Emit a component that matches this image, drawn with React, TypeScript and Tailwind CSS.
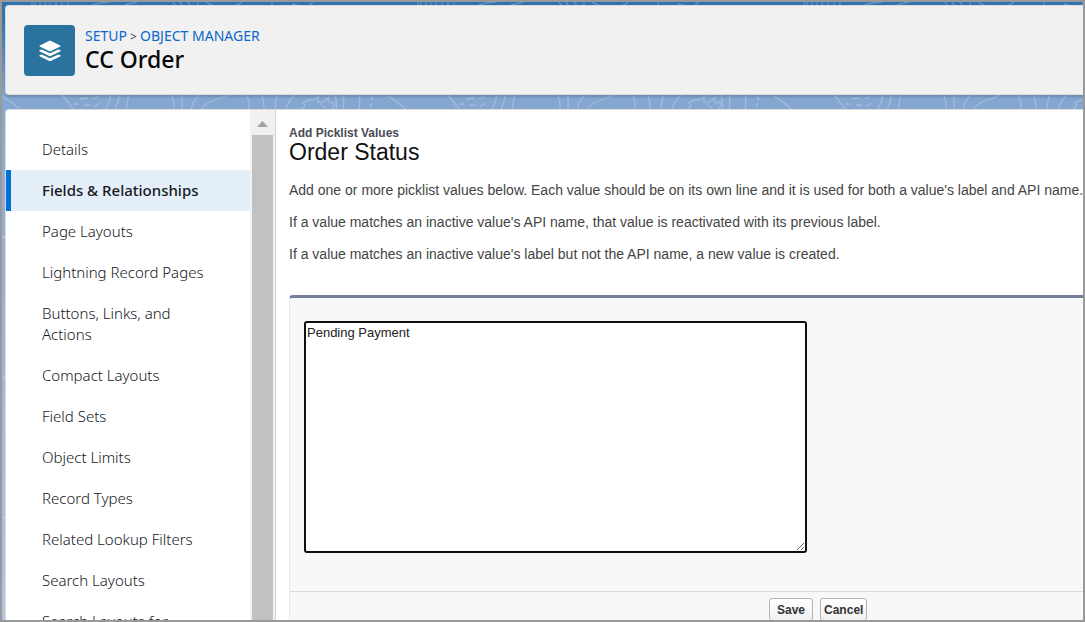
const navItems = [
  "Details",
  "Fields & Relationships",
  "Page Layouts",
  "Lightning Record Pages",
  "Buttons, Links, and Actions",
  "Compact Layouts",
  "Field Sets",
  "Object Limits",
  "Record Types",
  "Related Lookup Filters",
  "Search Layouts",
  "Search Layouts for Salesforce Classic",
];

const activeItem = "Fields & Relationships";

function ContourBackground() {
  return (
    <svg className="absolute inset-0 size-full" aria-hidden="true">
      <defs>
        <linearGradient id="sky" x1="0" y1="0" x2="0" y2="1">
          <stop offset="0" stopColor="#2e72b0" />
          <stop offset="0.03" stopColor="#3676b4" />
          <stop offset="0.15" stopColor="#83a6d0" />
          <stop offset="0.25" stopColor="#8cabd6" />
          <stop offset="1" stopColor="#b1c5e3" />
        </linearGradient>
        <pattern id="contours" width="386" height="140" patternUnits="userSpaceOnUse">
          <g fill="none" stroke="#ffffff" strokeOpacity="0.24" strokeWidth="1.3">
            <path d="M0 94C6 98 14 103 18 108M58 90L72 108M71 102h5M78 97l8-1M82 103h6M91 97l6-3M92 105l5-4M109 90q0 9-6 18M118 90q-1 9-5 18M127 90l-3 18" />
            <path d="M167 90q6 6 5 18M179 90q2 9 1 18M189 108q2-12 12-18M200 107C204 98 222 97 232 90M242 90q8 10 4 18M259 90q3 8 3 18M273 108q0-10 4-18M284 108q2-11 13-18" />
            <path d="M299 107q6-3 2-6q4-4 10-3q5-3 8-5M316 96q-1 6 5 4l6-5q-3 8 5 5q2 4-3 8M319 103l5 3M331 90q5 7 3 18M340 90q3 9 1 18M356 90q3 9 1 18M369 94l2 4M370 101l-2 4" />
            <path d="M30 0v4M33 0v4M38 0v4M43 0v4M48 0v4M54 0v4M60 0v4M66 0v4M90 3q10-3 18-3M123 3l12-3M171 0l3 4M178 0l3 4M186 0l3 4M196 0v4M204 0q6 4 12 4M228 4q8 0 12-4M270 0v4M290 2l8 2M306 4l5-4" />
          </g>
        </pattern>
      </defs>
      <rect width="100%" height="100%" fill="url(#sky)" />
      <rect width="100%" height="100%" fill="url(#contours)" />
    </svg>
  );
}

function LayersIcon() {
  return (
    <svg viewBox="0 0 24 24" className="size-6" fill="#ffffff" aria-hidden="true">
      <path d="M12 1.6 L22.2 6.6 Q23 7.1 22.2 7.6 L12.7 12.2 Q12 12.5 11.3 12.2 L1.8 7.6 Q1 7.1 1.8 6.6 Z" />
      <path d="M1.5 11.3 L3.6 10.4 L11.3 14.1 Q12 14.4 12.7 14.1 L20.4 10.4 L22.5 11.3 Q23.2 11.8 22.5 12.3 L12.7 17 Q12 17.3 11.3 17 L1.5 12.3 Q0.8 11.8 1.5 11.3 Z" />
      <path d="M1.5 16.3 L3.6 15.4 L11.3 19.1 Q12 19.4 12.7 19.1 L20.4 15.4 L22.5 16.3 Q23.2 16.8 22.5 17.3 L12.7 22 Q12 22.3 11.3 22 L1.5 17.3 Q0.8 16.8 1.5 16.3 Z" />
    </svg>
  );
}

function PageHeader() {
  return (
    <header className="flex items-center gap-2.5 rounded-l border border-r-0 border-[#dddbda] bg-[#f1f1f1] pt-[19px] pb-[18px] pl-[18px] shadow-[0_2px_2px_rgba(0,0,0,0.15)]">
      <div className="flex size-[51px] items-center justify-center rounded bg-[#2a739e]">
        <LayersIcon />
      </div>
      <div className="pb-1 font-['Noto_Sans',sans-serif]">
        <nav aria-label="Breadcrumb" className="text-sm leading-5 text-[#444444]">
          <a href="#setup" className="text-[#0b68cb]">SETUP</a>
          <span className="text-xs"> &gt; </span>
          <a href="#objects" className="text-[#0b68cb]">OBJECT MANAGER</a>
        </nav>
        <h1 className="text-[23px] leading-[26px] font-medium text-[#080707]">CC Order</h1>
      </div>
    </header>
  );
}

function Sidebar() {
  return (
    <div className="flex w-[270px] shrink-0 border-r border-[#d4d4d4]">
      <nav aria-label="Object settings" className="flex-1 pt-[19px] font-['Noto_Sans',sans-serif] text-[15px] leading-[21px] text-[#16181d]">
        <ul>
          {navItems.map((item) => (
            <li key={item}>
              <a
                href="#item"
                aria-current={item === activeItem ? "page" : undefined}
                className={
                  item === activeItem
                    ? "block border-l-[5px] border-[#0070d2] bg-[#e4effa] py-2.5 pr-9 pl-[31px] font-medium"
                    : "block py-2.5 pr-9 pl-9 font-light"
                }
              >
                {item}
              </a>
            </li>
          ))}
        </ul>
      </nav>
      <div className="flex w-[25px] flex-col items-center bg-[#f1f1f1]" aria-hidden="true">
        <svg viewBox="0 0 11 6" className="mt-[11px] mb-2 h-1.5 w-[11px] shrink-0" fill="#a3a3a3">
          <path d="M5.5 0 11 6H0z" />
        </svg>
        <div className="w-[21px] flex-1 bg-[#c1c1c1]" />
      </div>
    </div>
  );
}

function PicklistForm() {
  const button =
    "h-[23px] rounded-[3px] border border-[#b5b5b5] bg-linear-to-b from-white to-[#f0f0f0] text-xs font-bold text-[#333333]";
  return (
    <form className="mt-[33px] flex-1 rounded-tl border-t-3 border-l border-t-[#747e99] border-l-[#e6e6e6] bg-[#f8f8f8]">
      <div className="border-b border-[#dbdbdb] px-3.5 pt-[23px] pb-[38px]">
        <textarea
          aria-label="Picklist values"
          defaultValue="Pending Payment"
          className="block h-[232px] w-[503px] resize rounded-[3px] border-2 border-[#101010] bg-white px-px py-0.5 text-[13px] leading-[15px] text-[#222222] outline-none"
        />
      </div>
      <div className="flex gap-[7px] pt-1.5 pl-[479px]">
        <button type="button" className={`${button} px-[7px]`}>Save</button>
        <button type="button" className={`${button} px-[3px]`}>Cancel</button>
      </div>
    </form>
  );
}

export default function App() {
  return (
    <div className="relative flex h-screen flex-col overflow-hidden border-2 border-[#999999] font-['Liberation_Sans',Arial,sans-serif]">
      <ContourBackground />
      <div className="relative flex min-h-0 flex-1 flex-col gap-3.5 pt-[3px] pl-[3px]">
        <PageHeader />
        <div className="flex min-h-0 flex-1 overflow-hidden rounded-tl border-t border-l border-[#dddbda] bg-white">
          <Sidebar />
          <main className="flex min-w-0 flex-1 flex-col overflow-hidden pt-4 pl-[13px]">
            <p className="text-xs leading-[14px] font-bold text-[#4a4a56]">Add Picklist Values</p>
            <h2 className="text-[23px] leading-6 text-[#111111]">Order Status</h2>
            <div className="mt-[18px] flex flex-col gap-4 text-sm leading-4 whitespace-nowrap text-[#444444]">
              <p>Add one or more picklist values below. Each value should be on its own line and it is used for both a value's label and API name.</p>
              <p>If a value matches an inactive value's API name, that value is reactivated with its previous label.</p>
              <p>If a value matches an inactive value's label but not the API name, a new value is created.</p>
            </div>
            <PicklistForm />
          </main>
        </div>
      </div>
    </div>
  );
}
